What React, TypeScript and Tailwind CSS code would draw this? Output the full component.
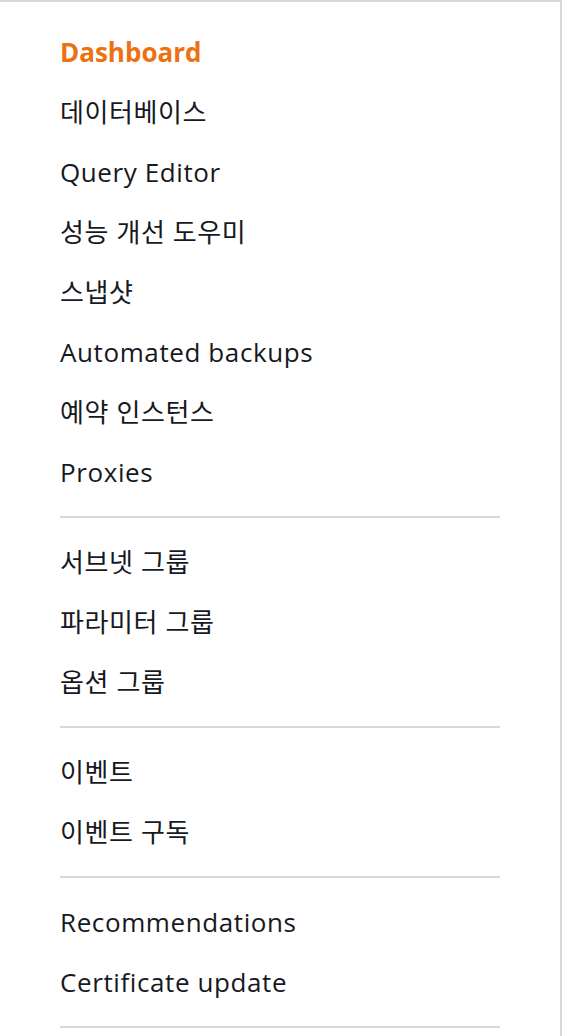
import React from 'react';

type NavItem = { label: string; active?: boolean };

const groups: NavItem[][] = [
  [
    { label: 'Dashboard', active: true },
    { label: '데이터베이스' },
    { label: 'Query Editor' },
    { label: '성능 개선 도우미' },
    { label: '스냅샷' },
    { label: 'Automated backups' },
    { label: '예약 인스턴스' },
    { label: 'Proxies' },
  ],
  [{ label: '서브넷 그룹' }, { label: '파라미터 그룹' }, { label: '옵션 그룹' }],
  [{ label: '이벤트' }, { label: '이벤트 구독' }],
  [{ label: 'Recommendations' }, { label: 'Certificate update' }],
];

const App = () => {
  return (
    <div
      className="w-[562px] h-[1036px] bg-white border-t-2 border-r-2 border-[#d5dbdb] pt-5 overflow-hidden"
      style={{ fontFamily: '"Open Sans", "Noto Sans CJK KR", sans-serif' }}
    >
      <nav>
        {groups.map((group, gi) => (
          <div key={gi}>
            <ul>
              {group.map((item) => (
                <li
                  key={item.label}
                  className={`h-[60px] flex items-center pl-[60px] text-[26px] ${
                    item.active ? 'font-bold text-[#ec7211]' : 'tracking-[0.6px] text-[#16191f]'
                  }`}
                >
                  {item.label}
                </li>
              ))}
            </ul>
            <hr className="ml-[60px] w-[440px] my-[14px] border-0 h-[2px] bg-[#d5dbdb]" />
          </div>
        ))}
      </nav>
    </div>
  );
};

export default App;
